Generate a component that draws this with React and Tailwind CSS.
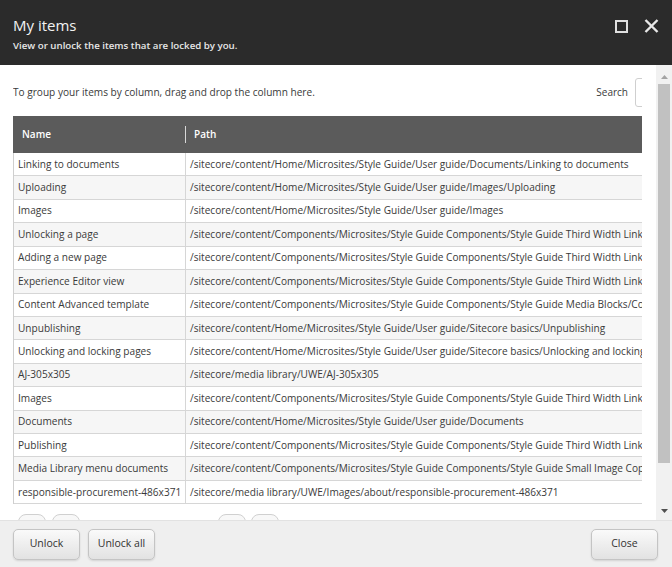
import React from "react";

const rows = [
  ["Linking to documents", "/sitecore/content/Home/Microsites/Style Guide/User guide/Documents/Linking to documents"],
  ["Uploading", "/sitecore/content/Home/Microsites/Style Guide/User guide/Images/Uploading"],
  ["Images", "/sitecore/content/Home/Microsites/Style Guide/User guide/Images"],
  ["Unlocking a page", "/sitecore/content/Components/Microsites/Style Guide Components/Style Guide Third Width Link"],
  ["Adding a new page", "/sitecore/content/Components/Microsites/Style Guide Components/Style Guide Third Width Link"],
  ["Experience Editor view", "/sitecore/content/Components/Microsites/Style Guide Components/Style Guide Third Width Link"],
  ["Content Advanced template", "/sitecore/content/Components/Microsites/Style Guide Components/Style Guide Media Blocks/Content"],
  ["Unpublishing", "/sitecore/content/Home/Microsites/Style Guide/User guide/Sitecore basics/Unpublishing"],
  ["Unlocking and locking pages", "/sitecore/content/Home/Microsites/Style Guide/User guide/Sitecore basics/Unlocking and locking pages"],
  ["AJ-305x305", "/sitecore/media library/UWE/AJ-305x305"],
  ["Images", "/sitecore/content/Components/Microsites/Style Guide Components/Style Guide Third Width Link"],
  ["Documents", "/sitecore/content/Home/Microsites/Style Guide/User guide/Documents"],
  ["Publishing", "/sitecore/content/Components/Microsites/Style Guide Components/Style Guide Third Width Link"],
  ["Media Library menu documents", "/sitecore/content/Components/Microsites/Style Guide Components/Style Guide Small Image Copy"],
  ["responsible-procurement-486x371", "/sitecore/media library/UWE/Images/about/responsible-procurement-486x371"],
];

function FooterButton({ children, className = "" }) {
  return (
    <button
      className={
        "h-[31px] w-[67px] rounded-[5px] border border-[#c4c4c4] bg-gradient-to-b from-[#fafafa] to-[#e2e2e2] text-[10.5px] text-[#333] shadow-[0_1px_2px_rgba(0,0,0,0.12)] " +
        className
      }
    >
      {children}
    </button>
  );
}

export default function App() {
  return (
    <div className="w-[672px] h-[567px] flex flex-col overflow-hidden bg-white font-['Open_Sans',sans-serif]">
      {/* Header */}
      <div className="h-[65px] shrink-0 bg-[#2b2b2b] flex items-start justify-between pl-[13px] pr-[13px]">
        <div className="pt-[15px]">
          <div className="text-[15px] leading-[21px] text-[#f2f2f2]">My items</div>
          <div className="mt-[3px] text-[9.7px] leading-[13px] font-semibold text-[#e8e8e8]">
            View or unlock the items that are locked by you.
          </div>
        </div>
        <div className="flex items-center gap-[16px] pt-[19px]">
          <svg width="13" height="13" viewBox="0 0 13 13" className="ml-[1px]">
            <rect x="1" y="1" width="11" height="11" fill="none" stroke="#e0e0e0" strokeWidth="2" />
          </svg>
          <svg width="15" height="14" viewBox="0 0 15 14">
            <path d="M1.5 1 L13.5 13 M13.5 1 L1.5 13" stroke="#e8e8e8" strokeWidth="2.4" />
          </svg>
        </div>
      </div>

      {/* Body */}
      <div className="flex-1 flex min-h-0">
        <div className="flex-1 min-w-0 pl-[13px] pr-[14px] overflow-hidden">
          <div className="w-full h-full overflow-hidden">
            {/* toolbar */}
            <div className="flex items-center h-[29px] mt-[13px]">
              <div className="text-[10.1px] text-[#3a3a3a]">To group your items by column, drag and drop the column here.</div>
              <div className="ml-auto mr-[-143px] flex items-center shrink-0">
                <span className="text-[10px] text-[#3a3a3a]">Search</span>
                <div className="ml-[7px] w-[150px] h-[29px] rounded-[3px] border border-[#cfcfcf] bg-white"></div>
              </div>
            </div>
            {/* table */}
            <div className="mt-[9px] w-[900px]">
              <div className="flex h-[37px] items-center bg-[#5b5b5b] text-[10px] font-semibold text-white">
                <div className="w-[172px] pl-[9px]">Name</div>
                <div className="h-[17px] w-px bg-[#d8d8d8]"></div>
                <div className="pl-[8px]">Path</div>
              </div>
              <div className="border-l border-[#cfcfcf]">
                {rows.map(([name, path], i) => (
                  <div
                    key={i}
                    className={
                      "flex h-[23.43px] items-center border-b border-[#d6d6d6] text-[10.1px] text-[#3a3a3a] whitespace-nowrap " +
                      (i % 2 === 1 ? "bg-[#f6f6f6]" : "bg-white")
                    }
                  >
                    <div className="w-[172px] shrink-0 h-full flex items-center pl-[4px] border-r border-[#d6d6d6]">{name}</div>
                    <div className="pl-[4px]">{path}</div>
                  </div>
                ))}
              </div>
            </div>
            {/* pager */}
            <div className="flex mt-[10px] pl-[5px]">
              <div className="w-[28px] h-[26px] rounded-[8px] border border-[#d0d0d0] bg-[#f8f8f8]"></div>
              <div className="ml-[6px] w-[28px] h-[26px] rounded-[8px] border border-[#d0d0d0] bg-[#f8f8f8]"></div>
              <div className="ml-[138px] w-[28px] h-[26px] rounded-[8px] border border-[#d0d0d0] bg-[#f8f8f8]"></div>
              <div className="ml-[5px] w-[28px] h-[26px] rounded-[8px] border border-[#d0d0d0] bg-[#f8f8f8]"></div>
            </div>
          </div>
        </div>
        {/* scrollbar */}
        <div className="w-[16px] shrink-0 bg-[#f1f1f1] flex flex-col items-center pt-[6px] pb-[3px]">
          <div className="h-[12px] flex items-center justify-center">
            <svg width="7" height="4" viewBox="0 0 7 4"><path d="M3.5 0 L7 4 L0 4 Z" fill="#a3a3a3" /></svg>
          </div>
          <div className="w-[12px] h-[379px] bg-[#c1c1c1] mt-[1px]"></div>
          <div className="flex-1"></div>
          <div className="h-[12px] flex items-center justify-center">
            <svg width="7" height="4" viewBox="0 0 7 4"><path d="M0 0 L7 0 L3.5 4 Z" fill="#505050" /></svg>
          </div>
        </div>
      </div>

      {/* Footer */}
      <div className="h-[47px] shrink-0 bg-[#efefef] border-t border-[#e2e2e2] flex items-center pl-[13px] pr-[14px]">
        <FooterButton>Unlock</FooterButton>
        <FooterButton className="ml-[8px]">Unlock all</FooterButton>
        <FooterButton className="ml-auto">Close</FooterButton>
      </div>
    </div>
  );
}
